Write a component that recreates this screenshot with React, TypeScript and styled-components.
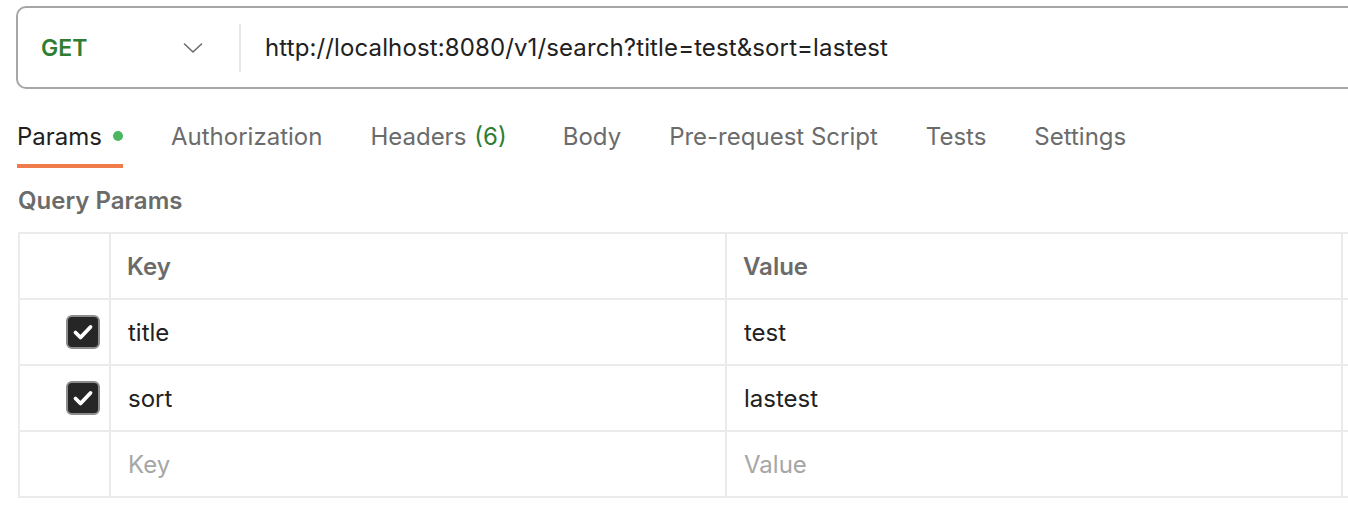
import React from "react";
import styled, { createGlobalStyle } from "styled-components";

const GlobalStyle = createGlobalStyle`
  html, body {
    margin: 0;
    padding: 0;
    background: #ffffff;
    overflow: hidden;
  }
  body {
    font-family: Inter, "Liberation Sans", sans-serif;
    color: #212121;
  }
  * {
    box-sizing: border-box;
  }
`;

interface Param {
    key: string;
    value: string;
}

const params: Param[] = [
    { key: "title", value: "test" },
    { key: "sort", value: "lastest" },
];

const tabs = ["Params", "Authorization", "Headers", "Body", "Pre-request Script", "Tests", "Settings"];

const CheckIcon = () => (
    <svg width="24" height="24" viewBox="0 0 24 24" fill="none">
        <path d="M4.5 12.5l5 5L19.5 7" stroke="#fff" strokeWidth="3.8" strokeLinecap="round" strokeLinejoin="round" />
    </svg>
);

const Chevron = () => (
    <svg width="20" height="12" viewBox="0 0 20 12" fill="none">
        <path d="M1.5 2l8.5 8 8.5-8" stroke="#6b6b6b" strokeWidth="1.6" strokeLinecap="round" strokeLinejoin="round" />
    </svg>
);

const App = () => {
    return (
        <>
            <GlobalStyle />
            <Page>
                <UrlBar>
                    <MethodSelect>
                        <Method>GET</Method>
                        <Chevron />
                    </MethodSelect>
                    <Divider />
                    <UrlText>http://localhost:8080/v1/search?title=test&amp;sort=lastest</UrlText>
                </UrlBar>

                <Tabs>
                    {tabs.map((t, i) => (
                        <Tab key={t} $active={i === 0}>
                            {t}
                            {i === 0 && <Dot />}
                            {t === "Headers" && <Count>(6)</Count>}
                        </Tab>
                    ))}
                </Tabs>

                <SectionTitle>Query Params</SectionTitle>

                <Table>
                    <Cell />
                    <HeadCell>Key</HeadCell>
                    <HeadCell>Value</HeadCell>
                    <Cell />
                    {params.map((p) => (
                        <React.Fragment key={p.key}>
                            <CheckCell>
                                <Checkbox>
                                    <CheckIcon />
                                </Checkbox>
                            </CheckCell>
                            <Cell>{p.key}</Cell>
                            <Cell>{p.value}</Cell>
                            <Cell />
                        </React.Fragment>
                    ))}
                    <Cell />
                    <Cell $placeholder>Key</Cell>
                    <Cell $placeholder>Value</Cell>
                    <Cell />
                </Table>
            </Page>
        </>
    );
};

export default App;

const Page = styled.div`
    width: 1436px;
    padding: 6px 0 0 16px;
`;

const UrlBar = styled.div`
    display: flex;
    align-items: center;
    height: 83px;
    border: 2px solid #a6a6a6;
    border-radius: 10px;
`;

const MethodSelect = styled.div`
    display: flex;
    align-items: center;
    justify-content: space-between;
    width: 221px;
    padding: 0 36px 0 23px;
`;

const Method = styled.span`
    color: #2f7d32;
    font-weight: 600;
    font-size: 23px;
`;

const Divider = styled.div`
    width: 2px;
    height: 48px;
    background: #e6e6e6;
`;

const UrlText = styled.span`
    margin-left: 24px;
    font-size: 24px;
    letter-spacing: 0.12px;
    color: #212121;
`;

const Tabs = styled.div`
    display: flex;
    gap: 48px;
    margin-top: 16px;
    padding-left: 1px;
`;

const Tab = styled.div<{ $active: boolean }>`
    display: flex;
    align-items: center;
    height: 63px;
    padding-top: 3px;
    font-size: 24px;
    color: ${(p) => (p.$active ? "#212121" : "#6b6b6b")};
    border-bottom: 4px solid ${(p) => (p.$active ? "#f07c4b" : "transparent")};
`;

const Dot = styled.span`
    width: 10px;
    height: 10px;
    margin-left: 11px;
    border-radius: 50%;
    background: #4cb760;
`;

const Count = styled.span`
    margin-left: 8px;
    margin-right: 8px;
    color: #2f7d32;
`;

const SectionTitle = styled.div`
    margin-top: 19px;
    padding-left: 2px;
    font-size: 24px;
    font-weight: 600;
    line-height: 28px;
    color: #6b6b6b;
`;

const Table = styled.div`
    display: grid;
    grid-template-columns: 91px 616px 616px 1fr;
    grid-auto-rows: 66px;
    margin-top: 17px;
    margin-left: 2px;
    border-top: 2px solid #ebebeb;
    border-left: 2px solid #ebebeb;
`;

const Cell = styled.div<{ $placeholder?: boolean }>`
    display: flex;
    align-items: center;
    padding-left: 17px;
    font-size: 24px;
    color: ${(p) => (p.$placeholder ? "#a6a6a6" : "#212121")};
    border-right: 2px solid #ebebeb;
    border-bottom: 2px solid #ebebeb;
`;

const HeadCell = styled(Cell)`
    font-weight: 600;
    color: #6b6b6b;
    padding-left: 16px;
`;

const CheckCell = styled(Cell)`
    justify-content: flex-end;
    padding: 0 9px 0 0;
`;

const Checkbox = styled.div`
    display: flex;
    align-items: center;
    justify-content: center;
    width: 34px;
    height: 34px;
    border: 2px solid #8c8c8c;
    border-radius: 6px;
    background: #262626;
`;
